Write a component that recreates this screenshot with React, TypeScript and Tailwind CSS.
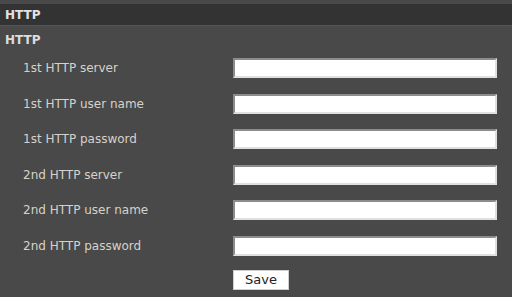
const fields = [
  "1st HTTP server",
  "1st HTTP user name",
  "1st HTTP password",
  "2nd HTTP server",
  "2nd HTTP user name",
  "2nd HTTP password",
];

export default function App() {
  return (
    <div
      className="w-[512px] h-[297px] overflow-hidden bg-[#494949] pt-[4px] text-[12px]"
      style={{ fontFamily: '"DejaVu Sans", Verdana, sans-serif' }}
    >
      {/* Title bar */}
      <div className="h-[22px] bg-[#333333] border-b border-[#555555] px-[5px] flex items-center font-bold text-[#e2e2e2]">
        HTTP
      </div>

      {/* Section heading */}
      <div className="px-[5px] pt-[5px] h-[32px] font-bold text-[#dcdcdc]">HTTP</div>

      <div className="flex flex-col gap-[15.6px]">
        {fields.map((label) => (
          <div key={label} className="flex items-center h-[20px]">
            <label className="w-[233px] pl-[23px] text-[#d6d2ca]">{label}</label>
            <input
              type={label.includes("password") ? "password" : "text"}
              className="w-[264px] h-[20px] bg-white border-2 border-t-[#8c8c8c] border-l-[#8c8c8c] border-r-[#e0e0e0] border-b-[#e0e0e0] outline-none px-1 text-black"
            />
          </div>
        ))}
      </div>

      <div className="pl-[233px] pt-[14px]">
        <button
          type="button"
          className="w-[56px] h-[20px] bg-white text-[#222222] text-[13px] border border-[#cfcfcf] leading-none"
        >
          Save
        </button>
      </div>
    </div>
  );
}
